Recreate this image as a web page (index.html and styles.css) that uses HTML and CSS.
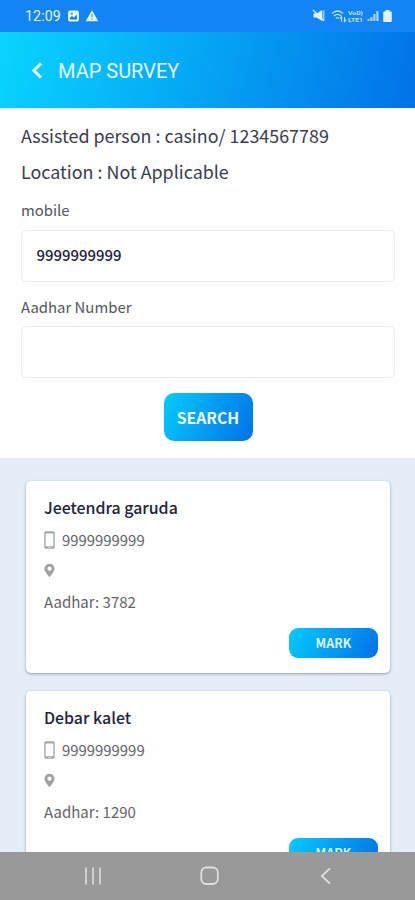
FILE: index.html
```html
<!DOCTYPE html>
<html lang="en">
<head>
<meta charset="utf-8">
<title>Map Survey</title>
<link rel="stylesheet" href="styles.css">
</head>
<body>
<svg class="defs" width="0" height="0" aria-hidden="true">
  <symbol id="phone" viewBox="0 0 12 20"><path fill="#a6a6a6" fill-rule="evenodd" d="M2 .5h8A1.700 1.700 0 0 1 11.700 2.200v15.600a1.700 1.700 0 0 1-1.700 1.700H2a1.700 1.700 0 0 1-1.700-1.700V2.200A1.700 1.700 0 0 1 2 .5zM1.800 3v13.800h8.400V3zM5 17.700v.8h2v-.8z"/></symbol>
  <symbol id="pin" viewBox="0 0 12 16"><path fill="#a0a0a0" fill-rule="evenodd" d="M6 .7A5.500 5.500 0 0 0 .5 6.200C.5 9.500 6 15.400 6 15.400S11.500 9.500 11.500 6.200A5.500 5.500 0 0 0 6 .7zM6 3.700a2.300 2.300 0 1 1 0 4.600 2.300 2.300 0 0 1 0-4.600z"/></symbol>
</svg>
<div class="screen">
  <div class="status">
    <span class="clock">12:09</span>
    <svg class="status-left" width="32" height="14" viewBox="0 0 32 14">
      <rect x="1" y="1.500" width="11" height="11" rx="2" fill="#e6f5ff"/>
      <path d="M3 10.500V8.500l2-1.500 2 1.500 3-3v5z" fill="#1284f6"/><circle cx="4.800" cy="4.800" r="1" fill="#1284f6"/>
      <path d="M25 1.300l6.300 11H18.700z" fill="#e6f5ff"/><path d="M25 5v3.500M25 9.700v1.200" stroke="#1284f6" stroke-width="1"/>
    </svg>
    <svg class="status-right" width="82" height="16" viewBox="0 0 82 16">
      <g fill="#e1f2ff">
        <path d="M1.500 5.500h3l5.500-3.500v11L4.500 9.500h-3z"/><path d="M10.500 2.500h2v10h-2z" opacity=".65"/>
        <path d="M66.500 13V3h-2.200V13zM63.500 13V6h-2.200V13zM60.500 13V9h-2.200V13zM57.500 13v-2h-2v2z" opacity=".75"/>
        <path d="M73.500 3.500V2h4v1.500h1.300a1 1 0 0 1 1 1V13a1 1 0 0 1-1 1h-6.600a1 1 0 0 1-1-1V4.500a1 1 0 0 1 1-1z"/>
      </g>
      <path d="M1 2l11 11" stroke="#e1f2ff" stroke-width="1.300"/>
      <g fill="none" stroke="#e1f2ff" stroke-width="1.200" opacity=".9">
        <path d="M20 5.500Q25.500 .5 31 5.500M22 8Q25.500 4.800 29 8M24 10.200q1.500-1.300 3 0M29.500 13.500V9l-1.500 1.700M32.500 9v4.500l1.500-1.700"/>
      </g>
      <text class="lte" x="36" y="7.300" textLength="15" lengthAdjust="spacingAndGlyphs">VoD)</text><text class="lte" x="36" y="14" textLength="15" lengthAdjust="spacingAndGlyphs">LTE1</text>
    </svg>
  </div>
  <header class="header">
    <svg width="12" height="20" viewBox="0 0 12 20"><path d="M10 2.500L2.800 9.500l7.200 7" fill="none" stroke="#e8f9ff" stroke-width="3"/></svg>
    <h1>MAP SURVEY</h1>
  </header>
  <form class="form">
    <p class="info person">Assisted person : casino/ 1234567789</p>
    <p class="info place">Location : Not Applicable</p>
    <label class="label mobile">mobile</label>
    <div class="field">9999999999</div>
    <label class="label aadhar">Aadhar Number</label>
    <div class="field"></div>
    <button class="search" type="button">SEARCH</button>
  </form>
  <main class="results">
    <article class="card">
      <h2>Jeetendra garuda</h2>
      <div class="row"><svg width="11" height="20"><use href="#phone"/></svg><span>9999999999</span></div>
      <div class="row pin"><svg width="11" height="15"><use href="#pin"/></svg></div>
      <p class="number">Aadhar: 3782</p>
      <button class="mark" type="button">MARK</button>
    </article>
    <article class="card">
      <h2>Debar kalet</h2>
      <div class="row"><svg width="11" height="20"><use href="#phone"/></svg><span>9999999999</span></div>
      <div class="row pin"><svg width="11" height="15"><use href="#pin"/></svg></div>
      <p class="number">Aadhar: 1290</p>
      <button class="mark" type="button">MARK</button>
    </article>
  </main>
  <nav class="nav">
    <svg width="20" height="20" viewBox="0 0 20 20"><path d="M3 1.500v17M10 1.500v17M17 1.500v17" stroke="#d6d6d6" stroke-width="1.800"/></svg>
    <svg width="20" height="20" viewBox="0 0 20 20"><rect x="1.300" y="1.500" width="16.500" height="16.500" rx="5" fill="none" stroke="#dedede" stroke-width="1.800"/></svg>
    <svg width="20" height="20" viewBox="0 0 20 20"><path d="M14 2.300L5.800 10l8.200 7.700" fill="none" stroke="#dedede" stroke-width="1.800"/></svg>
  </nav>
</div>
</body>
</html>
```
FILE: styles.css
```css
* { box-sizing: border-box; }
body, h1, h2, p { margin: 0; }
body {
  width: 415px; height: 900px; overflow: hidden;
  background: #fefefe;
  font-family: "Noto Sans CJK SC", "Noto Sans", sans-serif;
}
.defs { display: block; }
.screen { height: 900px; display: flex; flex-direction: column; }
.status {
  flex: none; height: 32px; padding: 0 21px 0 25px;
  display: flex; align-items: center;
  background: #1284f6; color: #e6f5ff;
}
.clock { width: 42px; font: 400 14.200px/32px Roboto, sans-serif; letter-spacing: .1px; }
.status-right { margin-left: auto; }
.lte { font: 700 6px Roboto, sans-serif; fill: #e1f2ff; opacity: .85; }
.header {
  flex: none; height: 76px; padding: 2px 0 0 31px;
  display: flex; align-items: center; gap: 15px;
  background: linear-gradient(103deg, #08d5ff 0%, #0272e8 100%);
}
.header h1 { color: #e8f9ff; font: 400 20px/24px Roboto, sans-serif; }
.form {
  flex: none; height: 350px; padding: 9px 20px 0 21px;
  display: flex; flex-direction: column;
}
.info { height: 36px; font-size: 17.900px; line-height: 36px; color: #3b3c50; white-space: nowrap; }
.label { height: 41px; font-size: 14.900px; line-height: 42px; color: #55565f; }
.field {
  flex: none; height: 52px; padding-left: 14.500px;
  border: 1.500px solid #ececec; border-radius: 5px;
  font-size: 14.900px; font-weight: 500; line-height: 48px; color: #20203a;
}
.aadhar { height: 44px; line-height: 50px; }
.search {
  flex: none; align-self: center; width: 89px; height: 48px; margin-top: 15px; padding: 2px 0 0;
  border: 0; border-radius: 10px; color: #f4fbff;
  background: linear-gradient(115deg, #04cbfc, #0272e8);
  font: 700 15.700px/46px "Noto Sans CJK SC", sans-serif;
}
.results {
  flex: 1; min-height: 0; overflow: hidden; padding: 23px 25px 0 26px;
  display: flex; flex-direction: column; gap: 18px;
  background: #e5eef8;
}
.card {
  flex: none; height: 192px; padding: 11px 12px 0 18px;
  display: flex; flex-direction: column;
  background: #fefefe; border-radius: 5px;
  box-shadow: 0 1px 3px rgba(60, 80, 105, .5);
}
.card h2 { height: 32px; font-size: 15.900px; font-weight: 500; line-height: 32px; color: #22223a; }
.row { height: 32px; display: flex; align-items: center; gap: 7px; font-size: 14.900px; line-height: 32px; color: #62636b; }
.row.pin { height: 29px; }
.number { height: 34px; font-size: 15px; line-height: 34px; color: #62636b; }
.mark {
  flex: none; align-self: flex-end; width: 89px; height: 30px; margin-top: 9px; padding: 0;
  border: 0; border-radius: 9px; color: #dff5ff;
  background: linear-gradient(115deg, #04cbfc, #0272e8);
  font: 700 12.500px/30px "Noto Sans CJK SC", sans-serif;
}
.nav {
  flex: none; height: 48px; padding: 0 79px 0 83px;
  display: flex; align-items: center; justify-content: space-between;
  background: #999;
}
```
